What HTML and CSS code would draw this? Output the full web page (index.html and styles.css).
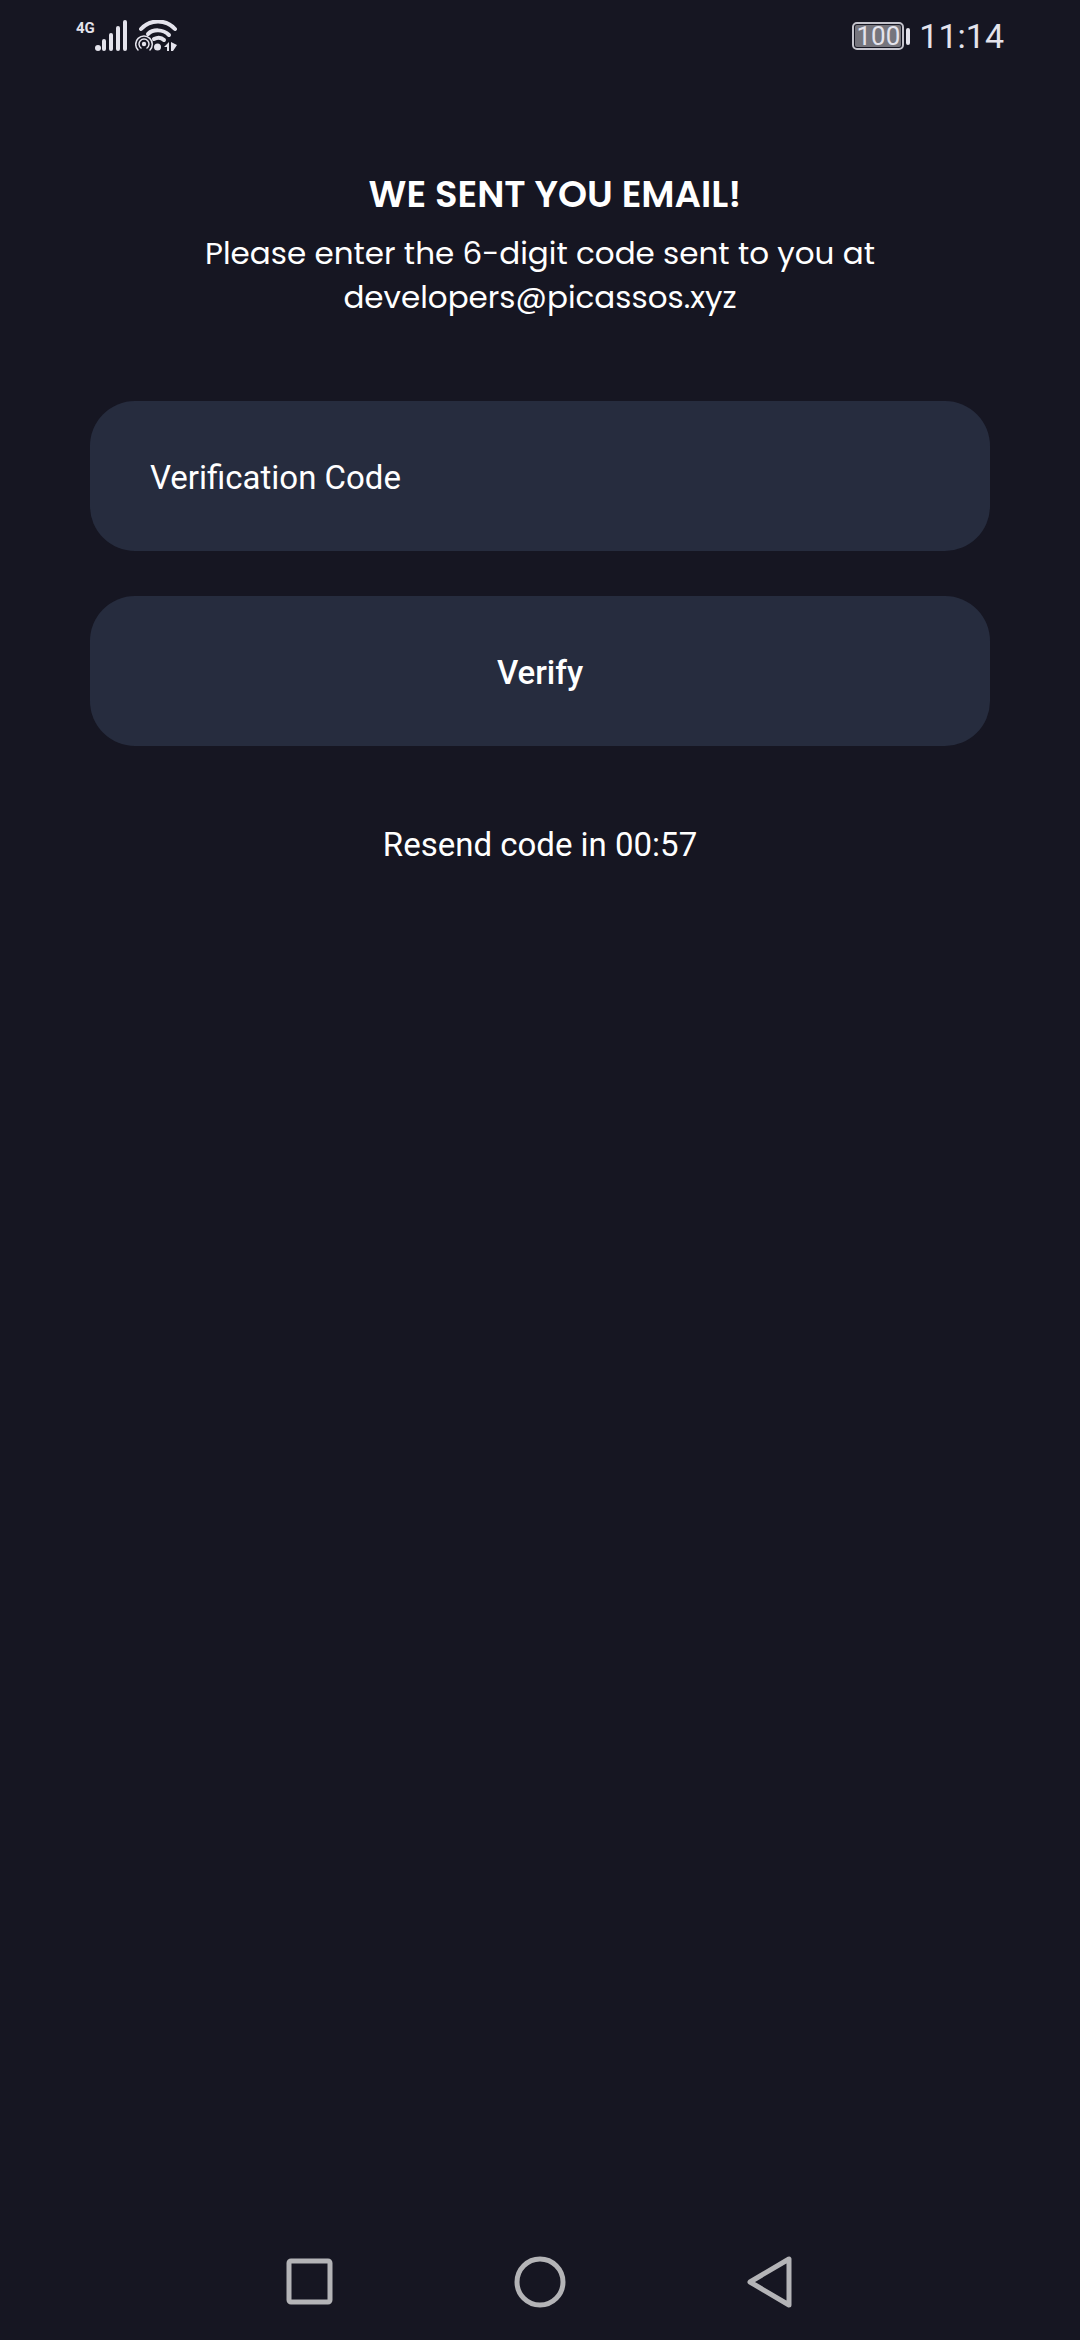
FILE: index.html
```html
<!DOCTYPE html>
<html lang="en">
<head>
<meta charset="utf-8">
<meta name="viewport" content="width=device-width, initial-scale=1">
<title>Verify your email</title>
<link rel="stylesheet" href="styles.css">
</head>
<body>
<div class="screen">
  <header class="status">
    <div class="status-group">
      <span class="network">4G</span>
      <svg class="signal" width="34" height="32" viewBox="0 0 34 32" fill="currentColor" aria-hidden="true">
        <circle cx="3" cy="28" r="3"/>
        <rect x="7" y="19" width="4" height="12" rx="2"/>
        <rect x="14" y="13" width="4" height="18" rx="2"/>
        <rect x="21" y="6" width="4" height="25" rx="2"/>
        <rect x="28" y="0" width="4" height="31" rx="2"/>
      </svg>
      <svg class="wifi" width="44" height="32" viewBox="0 0 44 32" fill="none" stroke="currentColor" stroke-linecap="round" aria-hidden="true">
        <path d="M6 9C15-1 31-1 40 9" stroke-width="4"/>
        <path d="M13 14C18 9 28 9 34 15" stroke-width="4"/>
        <path d="M19 19Q25 16 29 20" stroke-width="4"/>
        <circle cx="22.500" cy="27" r="3.500" fill="currentColor" stroke="none"/>
        <circle cx="9" cy="24" r="2.200" fill="currentColor" stroke="none"/>
        <path d="M6 28A5 5 0 1 1 12 28M3 30A8.300 8.300 0 1 1 15 30" stroke-width="1.500"/>
        <path d="M34 22V31H32V27H29ZM36 22L42 25L38 31H36Z" fill="currentColor" stroke="none"/>
      </svg>
    </div>
    <div class="status-group">
      <span class="battery">100</span>
      <span class="battery-tip"></span>
      <time class="clock">11:14</time>
    </div>
  </header>
  <main class="content">
    <h1 class="title">WE SENT YOU EMAIL!</h1>
    <p class="lead">Please enter the 6-digit code sent to you at<br>developers@picassos.xyz</p>
    <form class="form">
      <input class="control field" type="text" inputmode="numeric" placeholder="Verification Code" aria-label="Verification Code">
      <button class="control verify" type="button">Verify</button>
    </form>
    <p class="resend">Resend code in 00:57</p>
  </main>
  <nav class="nav" aria-label="System">
    <button class="nav-button" type="button" aria-label="Recent apps">
      <svg width="52" height="52" viewBox="0 0 52 52"><rect x="5" y="5" width="41" height="41" rx="2"/></svg>
    </button>
    <button class="nav-button" type="button" aria-label="Home">
      <svg width="52" height="52" viewBox="0 0 52 52"><circle cx="26" cy="26" r="23"/></svg>
    </button>
    <button class="nav-button" type="button" aria-label="Back">
      <svg width="52" height="52" viewBox="0 0 52 52"><path d="M45 3V49L6 26Z"/></svg>
    </button>
  </nav>
</div>
</body>
</html>
```
FILE: styles.css
```css
* {
  box-sizing: border-box;
}

body {
  margin: 0;
  background: #161622;
  color: #fff;
  font-family: Roboto, "Liberation Sans", sans-serif;
  font-size: 33px;
}

.screen {
  display: flex;
  flex-direction: column;
  min-height: 100vh;
}

.status {
  display: flex;
  justify-content: space-between;
  align-items: center;
  height: 72px;
  padding: 0 76px;
  color: #e4e3ec;
}

.status-group {
  display: flex;
  align-items: center;
}

.network {
  align-self: flex-start;
  font-size: 15px;
  font-weight: 700;
  line-height: 16px;
}

.wifi {
  margin-left: 6px;
}

.battery {
  width: 52px;
  height: 28px;
  border: 2px solid #c4c3cc;
  border-radius: 5px;
  background: #76757d content-box;
  padding: 1px;
  font-size: 26px;
  line-height: 22px;
  text-align: center;
}

.battery-tip {
  width: 4px;
  height: 17px;
  margin: 0 9px 0 2px;
  border-radius: 2px;
  background: currentColor;
}

.clock {
  font-size: 34px;
}

.content {
  flex: 1;
  padding: 98px 90px 0;
  text-align: center;
}

.title,
.lead {
  font-family: Poppins, Inter, sans-serif;
}

.title {
  margin: 0;
  padding-left: 30px;
  font-size: 37px;
  font-weight: 600;
  line-height: 48px;
}

.lead {
  margin: 13px 0 0;
  font-size: 31px;
  line-height: 44px;
}

.form {
  display: grid;
  gap: 45px;
  margin-top: 82px;
}

.control {
  width: 100%;
  height: 150px;
  padding: 2px 60px 0;
  border: 0;
  border-radius: 45px;
  background: #262c3e;
  color: inherit;
  font: inherit;
}

.field::placeholder {
  color: inherit;
  opacity: 1;
}

.verify {
  font-weight: 500;
}

.resend {
  margin: 79px 0 0;
  line-height: 40px;
}

.nav {
  display: grid;
  grid-template-columns: repeat(3, 1fr);
  width: 64%;
  height: 116px;
  margin: 0 auto;
}

.nav-button {
  display: grid;
  place-items: center;
  padding: 0;
  border: 0;
  background: none;
}

.nav-button svg {
  fill: none;
  stroke: #b4b4b7;
  stroke-width: 5;
  stroke-linejoin: round;
}
```
